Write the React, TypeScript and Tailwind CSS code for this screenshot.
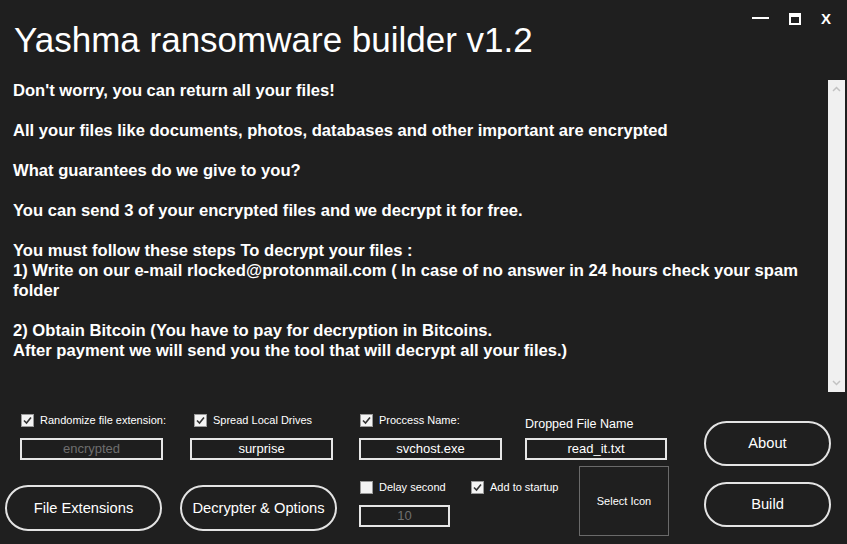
import React from "react";

const font = { fontFamily: '"Liberation Sans", Arial, sans-serif' };

const Check: React.FC<{ checked?: boolean }> = ({ checked }) => (
  <span className="w-[13px] h-[13px] bg-[#f4f4f4] border border-[#9a9a9a] flex items-center justify-center shrink-0">
    {checked && (
      <svg width="11" height="11" viewBox="0 0 11 11">
        <path d="M2 5.5 L4.5 8 L9 2.5" fill="none" stroke="#333" strokeWidth="1.6" />
      </svg>
    )}
  </span>
);

const Opt: React.FC<{ label: string; checked?: boolean; cls?: string }> = ({ label, checked, cls }) => (
  <label className={"flex shrink-0 items-center gap-[6px] text-[11px] h-[14px] whitespace-nowrap " + (cls || "")}>
    <Check checked={checked} />
    {label}
  </label>
);

const Field: React.FC<{ value: string; dim?: boolean; w: string; cls?: string }> = ({ value, dim, w, cls }) => (
  <div
    className={
      w +
      " h-[22px] border-2 border-[#e6e6e6] bg-[#1e1e1e] flex items-center justify-center text-[13px] " +
      (dim ? "text-[#6e6e6e] " : "text-white ") +
      (cls || "")
    }
  >
    {value}
  </div>
);

const Pill: React.FC<{ label: string; w: string; h: string; cls?: string }> = ({ label, w, h, cls }) => (
  <button
    className={
      w + " " + h + " rounded-full border-2 border-[#e3e3e3] text-white text-[14.7px] flex items-center justify-center whitespace-nowrap " + (cls || "")
    }
  >
    {label}
  </button>
);

export default function App() {
  return (
    <div className="w-[847px] h-[544px] bg-[#1f1f1f] text-white flex flex-col overflow-hidden" style={font}>
      {/* title bar */}
      <div className="h-[80px] flex justify-between">
        <div className="pl-[14px] pt-[20px] text-[35px] leading-[40px] whitespace-nowrap">Yashma ransomware builder v1.2</div>
        <div className="flex items-start gap-[20px] pt-[12px] pr-[16px]">
          <span className="w-[17px] h-[2px] bg-white mt-[5px]" />
          <span className="w-[12px] h-[12px] border-2 border-white border-t-[4px] mt-[1px]" />
          <span className="text-[15px] font-bold leading-[14px]">X</span>
        </div>
      </div>

      {/* ransom note text box */}
      <div className="h-[312px] flex">
        <div className="flex-1 pl-[13px] pr-[8px] pt-[1px] text-[16.6px] font-bold leading-[20px]">
          <p>Don't worry, you can return all your files!</p>
          <p className="mt-[20px]">All your files like documents, photos, databases and other important are encrypted</p>
          <p className="mt-[20px]">What guarantees do we give to you?</p>
          <p className="mt-[20px]">You can send 3 of your encrypted files and we decrypt it for free.</p>
          <p className="mt-[20px]">You must follow these steps To decrypt your files :</p>
          <p>1) Write on our e-mail rlocked@protonmail.com ( In case of no answer in 24 hours check your spam folder</p>
          <p className="mt-[20px]">2) Obtain Bitcoin (You have to pay for decryption in Bitcoins.</p>
          <p>After payment we will send you the tool that will decrypt all your files.)</p>
        </div>
        <div className="w-[17px] mr-[2px] bg-[#f0f0f0] flex flex-col justify-between items-center py-[6px]">
          <svg width="9" height="6" viewBox="0 0 9 6">
            <path d="M1 5 L4.5 1.5 L8 5" fill="none" stroke="#c2c2c2" strokeWidth="1.5" />
          </svg>
          <svg width="9" height="6" viewBox="0 0 9 6">
            <path d="M1 1 L4.5 4.5 L8 1" fill="none" stroke="#c2c2c2" strokeWidth="1.5" />
          </svg>
        </div>
      </div>

      {/* options */}
      <div className="flex-1 flex">
        {/* column A */}
        <div className="w-[180px] shrink-0 pl-[5px] pt-[21px] flex flex-col">
          <Opt label="Randomize file extension:" checked cls="ml-[16px]" />
          <Field value="encrypted" dim w="w-[143px]" cls="ml-[15px] mt-[11px]" />
          <Pill label="File Extensions" w="w-[157px]" h="h-[46px]" cls="mt-[25px]" />
        </div>

        {/* column B */}
        <div className="w-[179px] shrink-0 pt-[21px] flex flex-col">
          <Opt label="Spread Local Drives" checked cls="ml-[14px]" />
          <Field value="surprise" w="w-[143px]" cls="ml-[10px] mt-[11px]" />
          <Pill label="Decrypter & Options" w="w-[157px]" h="h-[46px]" cls="mt-[25px]" />
        </div>

        {/* column C */}
        <div className="w-[166px] shrink-0 pt-[21px] flex flex-col">
          <Opt label="Proccess Name:" checked cls="ml-[1px]" />
          <Field value="svchost.exe" w="w-[143px]" cls="mt-[11px]" />
          <div className="flex mt-[20px]">
            <Opt label="Delay second" cls="ml-[1px] w-[111px]" />
            <Opt label="Add to startup" checked />
          </div>
          <Field value="10" dim w="w-[91px]" cls="mt-[11px]" />
        </div>

        {/* column D */}
        <div className="w-[179px] shrink-0 pt-[25px] flex flex-col">
          <div className="text-[12.5px] leading-[14px] h-[14px] whitespace-nowrap">Dropped File Name</div>
          <Field value="read_it.txt" w="w-[142px]" cls="mt-[7px]" />
          <div className="mt-[6px] ml-[54px] w-[90px] h-[70px] border border-[#6a6a6a] flex items-center justify-center text-[11px]">
            Select Icon
          </div>
        </div>

        {/* column E */}
        <div className="pt-[29px] flex flex-col gap-[16px]">
          <Pill label="About" w="w-[127px]" h="h-[45px]" />
          <Pill label="Build" w="w-[127px]" h="h-[45px]" />
        </div>
      </div>
    </div>
  );
}
